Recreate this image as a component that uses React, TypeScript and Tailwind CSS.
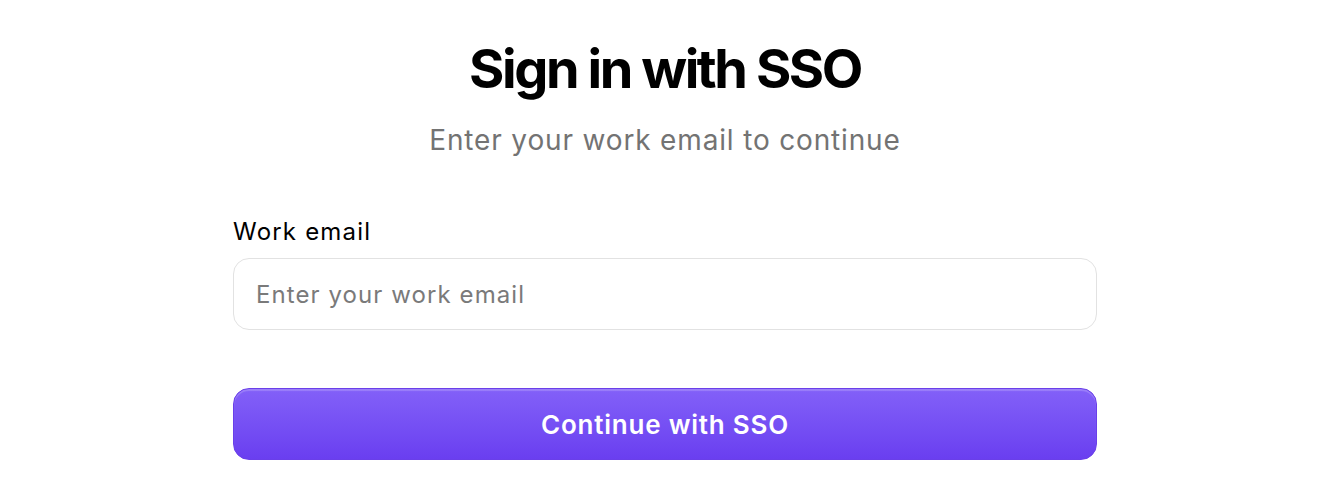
export default function App() {
  return (
    <div
      className="flex min-h-[486px] w-full justify-center bg-white pr-[4px] pt-[37px]"
      style={{ fontFamily: "Inter, 'Noto Sans', sans-serif" }}
    >
      <div className="flex w-[864px] flex-col">
        <h1 className="text-center text-[54px] font-bold leading-[64px] tracking-[-0.045em] text-black">
          Sign in with SSO
        </h1>
        <p className="mt-[21px] text-center text-[28px] leading-[36px] tracking-[0.03em] text-[#737373]">
          Enter your work email to continue
        </p>

        <label htmlFor="sso-email" className="mt-[59px] text-[24px] leading-[30px] tracking-[0.05em] text-black">
          Work email
        </label>
        <input
          id="sso-email"
          type="email"
          placeholder="Enter your work email"
          className="mt-[11px] h-[72px] w-full rounded-[16px] border border-[#e2e2e2] bg-white px-[22px] text-[24px] tracking-[0.045em] text-black outline-none placeholder:text-[#7a7a7a]"
        />

        <button
          type="button"
          className="mt-[58px] h-[72px] w-full rounded-[16px] border border-[#6a3fe9] bg-gradient-to-b from-[#8360f8] to-[#6a3ef0] text-[26px] font-semibold tracking-[0.03em] text-white shadow-[inset_0_2px_1px_rgba(255,255,255,0.2)]"
        >
          Continue with SSO
        </button>
      </div>
    </div>
  );
}
